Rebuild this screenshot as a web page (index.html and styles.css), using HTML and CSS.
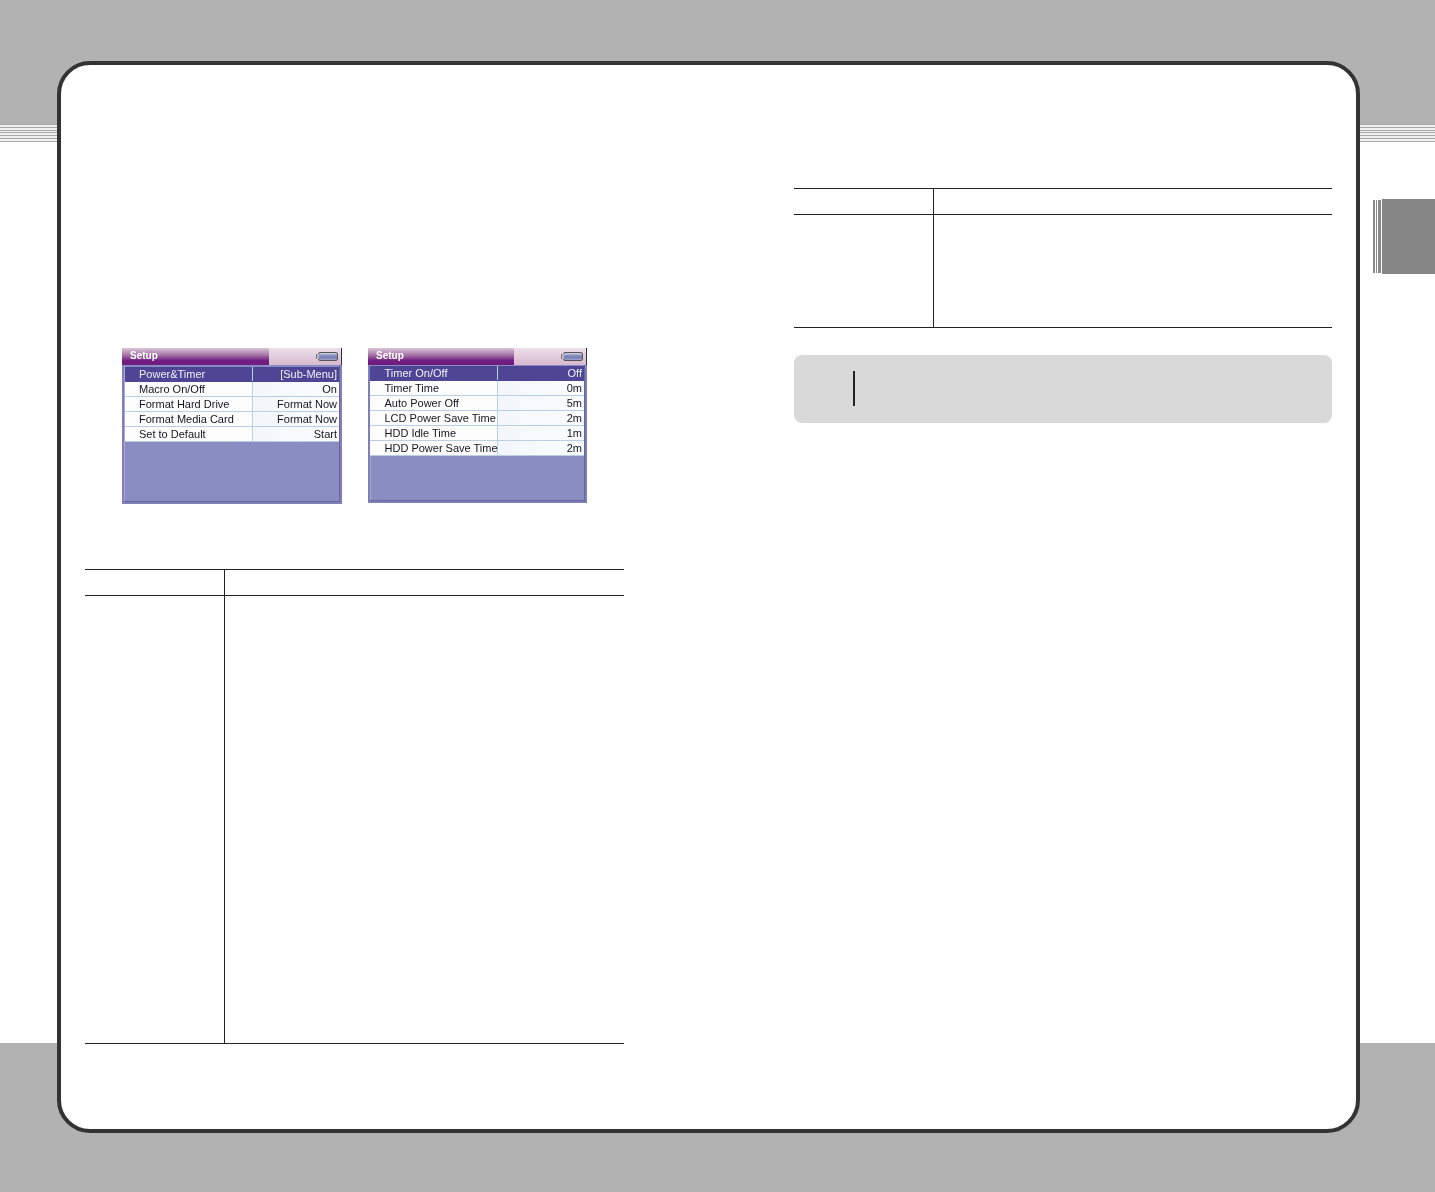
FILE: index.html

```html
<!DOCTYPE html>
<html lang="en">
<head>
  <meta charset="UTF-8" />
  <title>Setup</title>
  <link rel="stylesheet" href="styles.css">
</head>
<body>
  <div class="band-top"></div>
  <div class="stripes"></div>
  <div class="middle"></div>
  <div class="band-bottom"></div>

  <div class="side-tab">
    <span class="tab-line"></span>
    <span class="tab-line"></span>
    <span class="tab-line wide"></span>
    <span class="tab-block"></span>
  </div>

  <div class="sheet">
    <div class="page page-left">
      <div class="screens">
        <div class="screen">
          <div class="screen-title">
            <span class="title-text">Setup</span>
            <span class="title-right"><span class="battery"></span></span>
          </div>
          <div class="screen-body">
            <div class="row selected"><span class="name">Power&amp;Timer</span><span class="value">[Sub-Menu]</span></div>
            <div class="row"><span class="name">Macro On/Off</span><span class="value">On</span></div>
            <div class="row"><span class="name">Format Hard Drive</span><span class="value">Format Now</span></div>
            <div class="row"><span class="name">Format Media Card</span><span class="value">Format Now</span></div>
            <div class="row"><span class="name">Set to Default</span><span class="value">Start</span></div>
          </div>
        </div>
        <div class="screen second">
          <div class="screen-title">
            <span class="title-text">Setup</span>
            <span class="title-right"><span class="battery"></span></span>
          </div>
          <div class="screen-body">
            <div class="row selected"><span class="name">Timer On/Off</span><span class="value">Off</span></div>
            <div class="row"><span class="name">Timer Time</span><span class="value">0m</span></div>
            <div class="row"><span class="name">Auto Power Off</span><span class="value">5m</span></div>
            <div class="row"><span class="name">LCD Power Save Time</span><span class="value">2m</span></div>
            <div class="row"><span class="name">HDD Idle Time</span><span class="value">1m</span></div>
            <div class="row"><span class="name">HDD Power Save Time</span><span class="value">2m</span></div>
          </div>
        </div>
      </div>

      <div class="spec spec-left">
        <div class="spec-head"><span class="cell-a"></span><span class="cell-b"></span></div>
        <div class="spec-body"><span class="cell-a"></span><span class="cell-b"></span></div>
      </div>
    </div>

    <div class="page page-right">
      <div class="spec spec-right">
        <div class="spec-head"><span class="cell-a"></span><span class="cell-b"></span></div>
        <div class="spec-body"><span class="cell-a"></span><span class="cell-b"></span></div>
      </div>
      <div class="note"><span class="note-bar"></span></div>
    </div>
  </div>
</body>
</html>
```

FILE: styles.css

```css
* {
  margin: 0;
  padding: 0;
  box-sizing: border-box;
  font-family: "Liberation Sans", Arial, sans-serif;
}

html, body {
  height: 1192px;
  overflow: hidden;
}

body {
  background-color: white;
  display: flex;
  flex-direction: column;
}

.band-top {
  height: 124px;
  background-color: #b2b2b2;
}

.stripes {
  height: 18px;
  background: repeating-linear-gradient(to bottom, #a8a8a8 0, #a8a8a8 1.2px, #f0f0f0 1.2px, #f0f0f0 2.75px);
}

.middle {
  flex: 1;
}

.band-bottom {
  height: 149px;
  background-color: #b2b2b2;
}

/* white rounded page sitting over the bands */
.sheet {
  position: absolute;
  left: 57px;
  top: 61px;
  width: 1303px;
  height: 1072px;
  background-color: white;
  border: 4px solid #333;
  border-radius: 33px;
  display: flex;
}

.page-left {
  width: 733px;
  padding: 283px 0 0 24px;
}

.page-right {
  padding: 123px 0 0 0;
}

.screens {
  display: flex;
  gap: 26px;
  padding-left: 37px;
}

.screen {
  width: 220px;
  height: 156px;
  background-color: #8a8dc1;
  border: 2px solid #7f80b8;
  border-top: none;
  box-shadow: inset 0 -1px 0 #66669a, inset 1px 0 0 #a6a8d2, inset -1px 0 0 #66669a;
  display: flex;
  flex-direction: column;
  filter: blur(0.35px);
}

.screen.second {
  width: 219px;
  height: 155px;
}

.screen-title {
  height: 17px;
  margin: 0 -2px;
  display: flex;
  background: linear-gradient(to bottom, #d9c6d8 0, #a878a8 40%, #701c80 75%, #701c80 100%);
  border-right: 1px solid #333;
}

.title-text {
  flex: 1;
  padding-left: 8px;
  font-size: 10px;
  font-weight: bold;
  line-height: 16px;
  color: white;
}

.title-right {
  width: 72px;
  display: flex;
  justify-content: flex-end;
  align-items: center;
  padding-right: 3px;
  background: linear-gradient(to bottom, #ecdfe8, #d8b9d0);
}

.battery {
  position: relative;
  width: 20px;
  height: 9px;
  background: linear-gradient(to bottom, #d0d4e8, #7a82b6 45%, #7a82b6 70%, #a0a6cc);
  border: 1px solid #555;
  border-radius: 2px;
}

/* little nub on the left side of the battery */
.battery::before {
  content: "";
  position: absolute;
  left: -3px;
  top: 1px;
  width: 2px;
  height: 5px;
  background-color: #b8b8c8;
  border-left: 1px solid #777;
}

.screen-body {
  margin: 2px 1px 0 1px;
}

.second .screen-body {
  margin: 1px 1px 0 0;
}

.row {
  height: 15px;
  display: flex;
  background-color: #fdfdfd;
  border-bottom: 1px solid #b9cfe6;
  font-size: 11px;
  line-height: 14px;
  color: #15151f;
}

.row.selected {
  background-color: #4e4694;
  color: #f0f0fa;
  border-bottom-color: #4e4694;
}

.name {
  width: 128px;
  padding-left: 14px;
  white-space: nowrap;
  border-right: 1px solid #b9cfe6;
}

.second .name {
  padding-left: 14.5px;
}

.value {
  flex: 1;
  text-align: right;
  padding-right: 2px;
  background: linear-gradient(to right, #f3f7fc, #fbfcfe);
}

.selected .value {
  background: #4e4694;
}

.spec {
  width: 539px;
  border-top: 1px solid #222;
  border-bottom: 1px solid #222;
}

.spec-left {
  margin-top: 65px;
}

.spec-right {
  width: 538px;
}

.spec-head {
  height: 26px;
  display: flex;
  border-bottom: 1px solid #222;
}

.spec-body {
  display: flex;
}

.spec-left .spec-body {
  height: 447px;
}

.spec-right .spec-body {
  height: 112px;
}

.cell-a {
  width: 140px;
  border-right: 1px solid #222;
}

.note {
  width: 538px;
  height: 68px;
  margin-top: 27px;
  padding: 16px 0 0 59px;
  background-color: #d9d9d9;
  border-radius: 8px;
}

.note-bar {
  display: block;
  width: 2px;
  height: 35px;
  background-color: #222;
}

/* chapter tab on the right edge */
.side-tab {
  position: absolute;
  left: 1373px;
  top: 199px;
  width: 62px;
  height: 75px;
  display: flex;
}

.tab-line {
  width: 1.5px;
  height: 73px;
  margin: 1px 1px 0 0;
  background-color: #888;
}

.tab-line.wide {
  width: 3px;
}

.tab-block {
  flex: 1;
  background-color: #858585;
}
```
